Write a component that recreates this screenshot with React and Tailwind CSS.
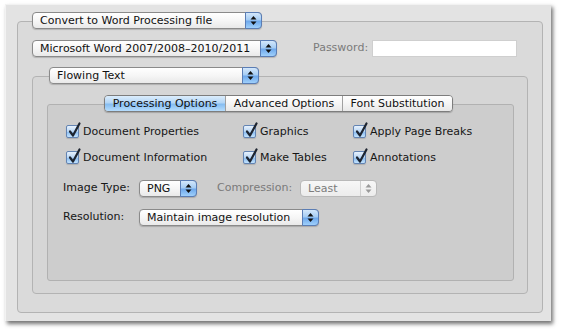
import React from "react";

const font = { fontFamily: '"DejaVu Sans", "Liberation Sans", sans-serif' };

function Arrows({ color = "#111" }) {
  return (
    <svg width="7" height="11" viewBox="0 0 7 11">
      <polygon points="3.5,1 6.5,4.5 0.5,4.5" fill={color} />
      <polygon points="3.5,10 6.5,6.5 0.5,6.5" fill={color} />
    </svg>
  );
}

function Popup({ label, className = "", disabled = false }) {
  if (disabled) {
    return (
      <div
        className={`flex h-[17px] items-stretch rounded-[4px] border border-[#b9b9b9] bg-gradient-to-b from-[#f7f7f7] to-[#ececec] text-[11px] text-[#7c7c7c] ${className}`}
      >
        <div className="flex flex-1 items-center pl-[7px] leading-none">{label}</div>
        <div className="flex w-[16px] items-center justify-center border-l border-[#cfcfcf]">
          <Arrows color="#9a9a9a" />
        </div>
      </div>
    );
  }
  return (
    <div
      className={`relative z-10 flex h-[17px] items-stretch rounded-[4px] border border-[#8a8a8a] bg-gradient-to-b from-[#ffffff] via-[#f6f6f6] to-[#e9e9e9] text-[11px] text-[#111] shadow-[0_1px_1px_rgba(0,0,0,0.18)] ${className}`}
    >
      <div className="flex flex-1 items-center pl-[7px] leading-none">{label}</div>
      <div className="-my-px -mr-px flex w-[17px] items-center justify-center rounded-r-[4px] border border-[#5a7db5] bg-[linear-gradient(to_bottom,#d3e7fb_0%,#a6cdf4_45%,#6fa9ec_55%,#9fd0fb_100%)]">
        <Arrows />
      </div>
    </div>
  );
}

function Check({ label, className = "" }) {
  return (
    <div className={`flex items-center ${className}`}>
      <div className="relative h-[13px] w-[13px] shrink-0 rounded-[2px] border border-[#6384b3] bg-[linear-gradient(to_bottom,#e8f2fd_0%,#b7d5f4_50%,#8cbdf0_55%,#c2e2fd_100%)] shadow-[0_1px_1px_rgba(0,0,0,0.15)]">
        <svg className="absolute left-[1px] top-[-4px]" width="14" height="16" viewBox="0 0 14 16">
          <path d="M2 9.5 L5 13.5 L11.5 1.5" stroke="#1d2430" strokeWidth="2.2" fill="none" strokeLinecap="round" strokeLinejoin="round" />
        </svg>
      </div>
      <span className="ml-[4px] text-[11px] leading-none text-[#161616]">{label}</span>
    </div>
  );
}

export default function App() {
  return (
    <div className="h-[329px] w-[563px] bg-white pl-[5px] pt-[4px]" style={font}>
      <div className="h-[317px] w-[546px] border-l border-t border-[#f2f2f2] bg-[#e3e3e3] pl-[11px] pt-[7px] shadow-[2px_3px_4px_rgba(0,0,0,0.55)]">
        {/* Outer group */}
        <div className="flex flex-col">
          <Popup label="Convert to Word Processing file" className="ml-[15px] w-[230px]" />
          <div className="-mt-[8px] h-[292px] w-[526px] rounded-[4px] border border-[#b3b3b3] bg-[#dadada] pl-[14px] pt-[18px]">
            <div className="flex items-center">
              <Popup label="Microsoft Word 2007/2008–2010/2011" className="w-[245px]" />
              <span className="ml-[36px] text-[11px] text-[#7a7a7a]">Password:</span>
              <div className="ml-[4px] h-[17px] w-[145px] border border-[#cfcfcf] bg-white" />
            </div>
            {/* Group 2 */}
            <div className="mt-[10px] flex flex-col">
              <Popup label="Flowing Text" className="ml-[17px] w-[210px]" />
              <div className="-mt-[8px] h-[218px] w-[496px] rounded-[4px] border border-[#b3b3b3] bg-[#d6d6d6] pl-[14px] pt-[18px]">
                <div className="flex flex-col">
                  <div className="relative z-10 ml-[57px] flex h-[17px] w-[349px] overflow-hidden rounded-[4px] border border-[#7d7d7d] text-[11px] text-[#111] shadow-[0_1px_1px_rgba(0,0,0,0.2)]">
                    <div className="flex w-[120px] items-center justify-center bg-[linear-gradient(to_bottom,#dcedfc_0%,#b3d6f6_45%,#86bdf1_55%,#b6ddfd_100%)] leading-none">
                      Processing Options
                    </div>
                    <div className="flex w-[117px] items-center justify-center border-l border-[#a0a0a0] bg-gradient-to-b from-white via-[#f5f5f5] to-[#e8e8e8] leading-none">
                      Advanced Options
                    </div>
                    <div className="flex flex-1 items-center justify-center border-l border-[#a0a0a0] bg-gradient-to-b from-white via-[#f5f5f5] to-[#e8e8e8] leading-none">
                      Font Substitution
                    </div>
                  </div>
                  <div className="-mt-[8px] h-[177px] w-[467px] rounded-[3px] border border-[#b1b1b1] bg-[#cdcdcd] pl-[18px] pt-[20px]">
                    <div className="flex">
                      <div className="flex w-[177px] flex-col gap-[13px]">
                        <Check label="Document Properties" />
                        <Check label="Document Information" />
                      </div>
                      <div className="flex w-[110px] flex-col gap-[13px]">
                        <Check label="Graphics" />
                        <Check label="Make Tables" />
                      </div>
                      <div className="flex flex-col gap-[13px]">
                        <Check label="Apply Page Breaks" />
                        <Check label="Annotations" />
                      </div>
                    </div>
                    <div className="-ml-[3px] mt-[16px] flex items-center">
                      <span className="w-[76px] text-[11px] text-[#161616]">Image Type:</span>
                      <Popup label="PNG" className="w-[58px]" />
                      <span className="ml-[20px] w-[83px] text-[11px] text-[#7a7a7a]">Compression:</span>
                      <Popup label="Least" disabled className="w-[77px]" />
                    </div>
                    <div className="-ml-[3px] mt-[12px] flex items-center">
                      <span className="w-[76px] text-[11px] text-[#161616]">Resolution:</span>
                      <Popup label="Maintain image resolution" className="w-[180px]" />
                    </div>
                  </div>
                </div>
              </div>
            </div>
          </div>
        </div>
      </div>
    </div>
  );
}
